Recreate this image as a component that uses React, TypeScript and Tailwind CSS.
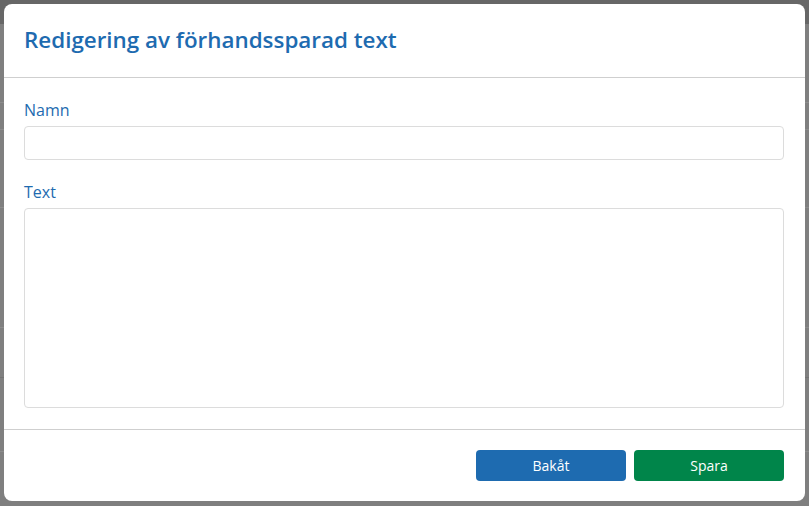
export default function App() {
  return (
    <div
      className="relative h-[506px] w-[809px] overflow-hidden bg-[#7f7f7f]"
      style={{ fontFamily: '"Open Sans", "Liberation Sans", sans-serif' }}
    >
      {/* dimmed page behind the dialog */}
      <div className="flex h-full flex-col">
        <div className="h-[24px] bg-[#676767]" />
        <div className="h-[79px] border-b border-[#8c8c8c]" />
        <div className="h-[27px] border-b border-[#8c8c8c]" />
        <div className="h-[78px] border-b border-[#8c8c8c]" />
        <div className="h-[120px] border-b border-[#8c8c8c]" />
        <div className="h-[50px] border-b border-[#737373]" />
        <div className="h-[74px] border-b border-[#8c8c8c]" />
      </div>

      {/* dialog */}
      <div className="absolute inset-0 p-1">
        <div className="flex h-[497px] w-[801px] flex-col rounded-lg bg-white">
          <div className="flex h-[74px] items-center border-b border-[#cfcfcf] px-5 pb-[1px]">
            <h1 className="text-[22.4px] font-semibold text-[#1e6bb0]">
              Redigering av förhandssparad text
            </h1>
          </div>

          <div className="flex flex-col pl-5 pr-[21px] pt-5 pb-[21px]">
            <label className="mb-1 text-[16px] leading-6 text-[#1e6bb0]">Namn</label>
            <input
              className="h-[34px] rounded border border-[#dcdcdc] px-2 text-sm outline-none"
              type="text"
            />
            <label className="mt-5 mb-1 text-[16px] leading-6 text-[#1e6bb0]">Text</label>
            <textarea className="h-[200px] resize-none rounded border border-[#dcdcdc] px-2 text-sm outline-none" />
          </div>

          <div className="flex justify-end gap-2 border-t border-[#cfcfcf] pl-5 pr-[21px] pt-5">
            <button className="h-[31px] w-[150px] rounded bg-[#1e6bb0] text-[14px] text-white">
              Bakåt
            </button>
            <button className="h-[31px] w-[150px] rounded bg-[#00854a] text-[14px] text-white">
              Spara
            </button>
          </div>
        </div>
      </div>
    </div>
  );
}
